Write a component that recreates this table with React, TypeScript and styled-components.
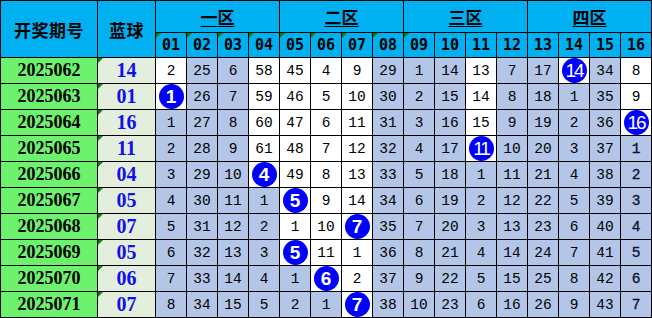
import React from 'react';
import styled, { createGlobalStyle } from 'styled-components';

const GlobalStyle = createGlobalStyle`
  html, body {
    margin: 0;
    padding: 0;
    background: #FFFFFF;
  }
`;

const Sheet = styled.div`
  display: grid;
  grid-template-columns: 96px 57px repeat(16, 30px);
  grid-template-rows: 31px 24px repeat(10, 25px);
  gap: 1px;
  padding: 1px;
  width: 652px;
  box-sizing: border-box;
  background: #000000;
`;

const Cell = styled.div<{ $bg: string }>`
  position: relative;
  display: flex;
  align-items: center;
  justify-content: center;
  background: ${(p) => p.$bg};
  overflow: visible;
`;

const TitleCell = styled(Cell)<{ $col: number }>`
  grid-row: 1 / 3;
  grid-column: ${(p) => p.$col};
  font-family: "Noto Sans CJK SC", "Liberation Sans", sans-serif;
  font-size: 17px;
  font-weight: 700;
  color: #000000;
  letter-spacing: 0.5px;
`;

const ZoneCell = styled(Cell)<{ $start: number }>`
  grid-column: ${(p) => p.$start} / span 4;
  font-family: "Noto Sans CJK SC", "Liberation Sans", sans-serif;
  font-size: 17px;
  font-weight: 700;
  color: #000000;
  text-decoration: underline;
  text-underline-offset: 2px;
`;

const NumHead = styled(Cell)`
  font-family: "DejaVu Sans Mono", "Liberation Mono", monospace;
  font-size: 15px;
  font-weight: 700;
  color: #000000;
`;

const PeriodCell = styled(Cell)`
  font-family: "Liberation Serif", serif;
  font-size: 18px;
  font-weight: 700;
  color: #000000;
`;

const BlueCell = styled(Cell)`
  font-family: "Liberation Serif", serif;
  font-size: 20px;
  font-weight: 700;
  color: #1010F0;
`;

const DataCell = styled(Cell)<{ $strong?: boolean }>`
  font-family: "Liberation Mono", monospace;
  font-size: 14.5px;
  color: ${(p) => (p.$strong ? '#101030' : '#000000')};
  -webkit-text-stroke: ${(p) => (p.$strong ? '0.35px #101030' : '0')};
`;

const Ball = styled.span<{ $wide: boolean }>`
  position: relative;
  z-index: 1;
  display: flex;
  align-items: center;
  justify-content: center;
  flex: none;
  width: 25px;
  height: 25px;
  border-radius: 50%;
  background: #0000FF;
  color: #FFFFFF;
  font-family: "Liberation Sans", sans-serif;
  font-size: ${(p) => (p.$wide ? '19px' : '19px')};
  font-weight: ${(p) => (p.$wide ? 400 : 700)};
  letter-spacing: ${(p) => (p.$wide ? '-2px' : '0')};
`;

const Flag = styled.span`
  position: absolute;
  top: 0;
  left: 0;
  width: 0;
  height: 0;
  border-top: 5px solid #108010;
  border-right: 5px solid transparent;
`;

const HEADER_BLUE = '#00B0F0';
const PERIOD_GREEN = '#6CF26C';
const BLUE_COL_BG = '#E4EEDC';
const CELL_BLUE = '#B4C6E7';
const CELL_WHITE = '#FFFFFF';

type Draw = { period: string; blue: string; values: number[]; marks: string };

const draws: Draw[] = [
  { period: '2025062', blue: '14', values: [2, 25, 6, 58, 45, 4, 9, 29, 1, 14, 13, 7, 17, 14, 34, 8], marks: 'wbbwwwwbbbwbbwbw' },
  { period: '2025063', blue: '01', values: [1, 26, 7, 59, 46, 5, 10, 30, 2, 15, 14, 8, 18, 1, 35, 9], marks: 'wbbwwwwbbbwbbbbw' },
  { period: '2025064', blue: '16', values: [1, 27, 8, 60, 47, 6, 11, 31, 3, 16, 15, 9, 19, 2, 36, 16], marks: 'bbbwwwwbbbwbbbbw' },
  { period: '2025065', blue: '11', values: [2, 28, 9, 61, 48, 7, 12, 32, 4, 17, 11, 10, 20, 3, 37, 1], marks: 'bbbwwwwbbbwbbbbb' },
  { period: '2025066', blue: '04', values: [3, 29, 10, 4, 49, 8, 13, 33, 5, 18, 1, 11, 21, 4, 38, 2], marks: 'bbbwwwwbbbbbbbbb' },
  { period: '2025067', blue: '05', values: [4, 30, 11, 1, 5, 9, 14, 34, 6, 19, 2, 12, 22, 5, 39, 3], marks: 'bbbbwwwbbbbbbbbb' },
  { period: '2025068', blue: '07', values: [5, 31, 12, 2, 1, 10, 7, 35, 7, 20, 3, 13, 23, 6, 40, 4], marks: 'bbbbwwwbbbbbbbbb' },
  { period: '2025069', blue: '05', values: [6, 32, 13, 3, 5, 11, 1, 36, 8, 21, 4, 14, 24, 7, 41, 5], marks: 'bbbbwwwbbbbbbbbb' },
  { period: '2025070', blue: '06', values: [7, 33, 14, 4, 1, 6, 2, 37, 9, 22, 5, 15, 25, 8, 42, 6], marks: 'bbbbbwwbbbbbbbbb' },
  { period: '2025071', blue: '07', values: [8, 34, 15, 5, 2, 1, 7, 38, 10, 23, 6, 16, 26, 9, 43, 7], marks: 'bbbbbbwbbbbbbbbb' },
];

const zones = [
  { label: '一区', start: 3 },
  { label: '二区', start: 7 },
  { label: '三区', start: 11 },
  { label: '四区', start: 15 },
];

const columns = Array.from({ length: 16 }, (_, i) => String(i + 1).padStart(2, '0'));

export default function App() {
  return (
    <>
      <GlobalStyle />
      <Sheet>
        <TitleCell $bg={HEADER_BLUE} $col={1}>开奖期号</TitleCell>
        <TitleCell $bg={HEADER_BLUE} $col={2}>蓝球</TitleCell>
        {zones.map((z) => (
          <ZoneCell key={z.label} $bg={HEADER_BLUE} $start={z.start}>
            {z.label}
          </ZoneCell>
        ))}
        {columns.map((c, i) => (
          <NumHead key={c} $bg={HEADER_BLUE}>
            {i < 9 && <Flag />}
            {c}
          </NumHead>
        ))}

        {draws.map((d, rowIdx) => {
          const ballCol = parseInt(d.blue, 10) - 1;
          return (
            <React.Fragment key={d.period}>
              <PeriodCell $bg={PERIOD_GREEN}>{d.period}</PeriodCell>
              <BlueCell $bg={BLUE_COL_BG}>
                <Flag />
                {d.blue}
              </BlueCell>
              {d.values.map((v, i) => {
                const bg = d.marks[i] === 'w' ? CELL_WHITE : CELL_BLUE;
                if (i === ballCol) {
                  return (
                    <DataCell key={i} $bg={bg}>
                      <Ball $wide={v >= 10}>{v}</Ball>
                    </DataCell>
                  );
                }
                return (
                  <DataCell key={i} $bg={bg} $strong={i === 15 && rowIdx >= 3}>
                    {v}
                  </DataCell>
                );
              })}
            </React.Fragment>
          );
        })}
      </Sheet>
    </>
  );
}
